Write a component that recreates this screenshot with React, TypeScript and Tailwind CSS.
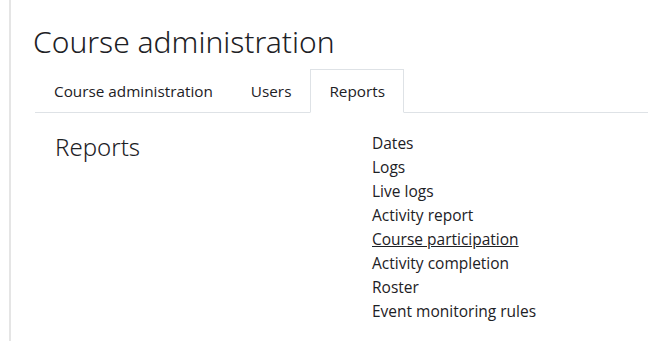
const links = [
  "Dates",
  "Logs",
  "Live logs",
  "Activity report",
  "Course participation",
  "Activity completion",
  "Roster",
  "Event monitoring rules",
];

export default function App() {
  return (
    <div
      className="h-[341px] w-[648px] overflow-hidden bg-white text-[#1d2125]"
      style={{ fontFamily: '"Open Sans", "Noto Sans", sans-serif' }}
    >
      <div className="ml-[9px] h-full border-l-2 border-[#e5e5e5] pl-[22px]">
        <h1 className="pt-[20px] font-['Noto_Sans',sans-serif] text-[30px] font-light leading-[44px]">
          Course administration
        </h1>
        <div className="mt-[5px] ml-[2px] flex border-b border-[#dee2e6]">
          <div className="-mb-px border border-transparent px-[18px] py-[10px] text-[15.3px] leading-[22px]">
            Course administration
          </div>
          <div className="-mb-px border border-transparent px-[18px] py-[10px] text-[15.3px] leading-[22px]">
            Users
          </div>
          <div className="-mb-px border border-[#dee2e6] border-b-white bg-white px-[18px] py-[10px] text-[15.3px] leading-[22px]">
            Reports
          </div>
        </div>
        <div className="flex pt-[18px]">
          <h2 className="w-[339px] pl-[22px] font-['Noto_Sans',sans-serif] text-[24px] font-light leading-[32px]">
            Reports
          </h2>
          <ul className="text-[15.5px] leading-[24px]">
            {links.map((l) => (
              <li key={l} className={l === "Course participation" ? "underline" : ""}>
                {l}
              </li>
            ))}
          </ul>
        </div>
      </div>
    </div>
  );
}
